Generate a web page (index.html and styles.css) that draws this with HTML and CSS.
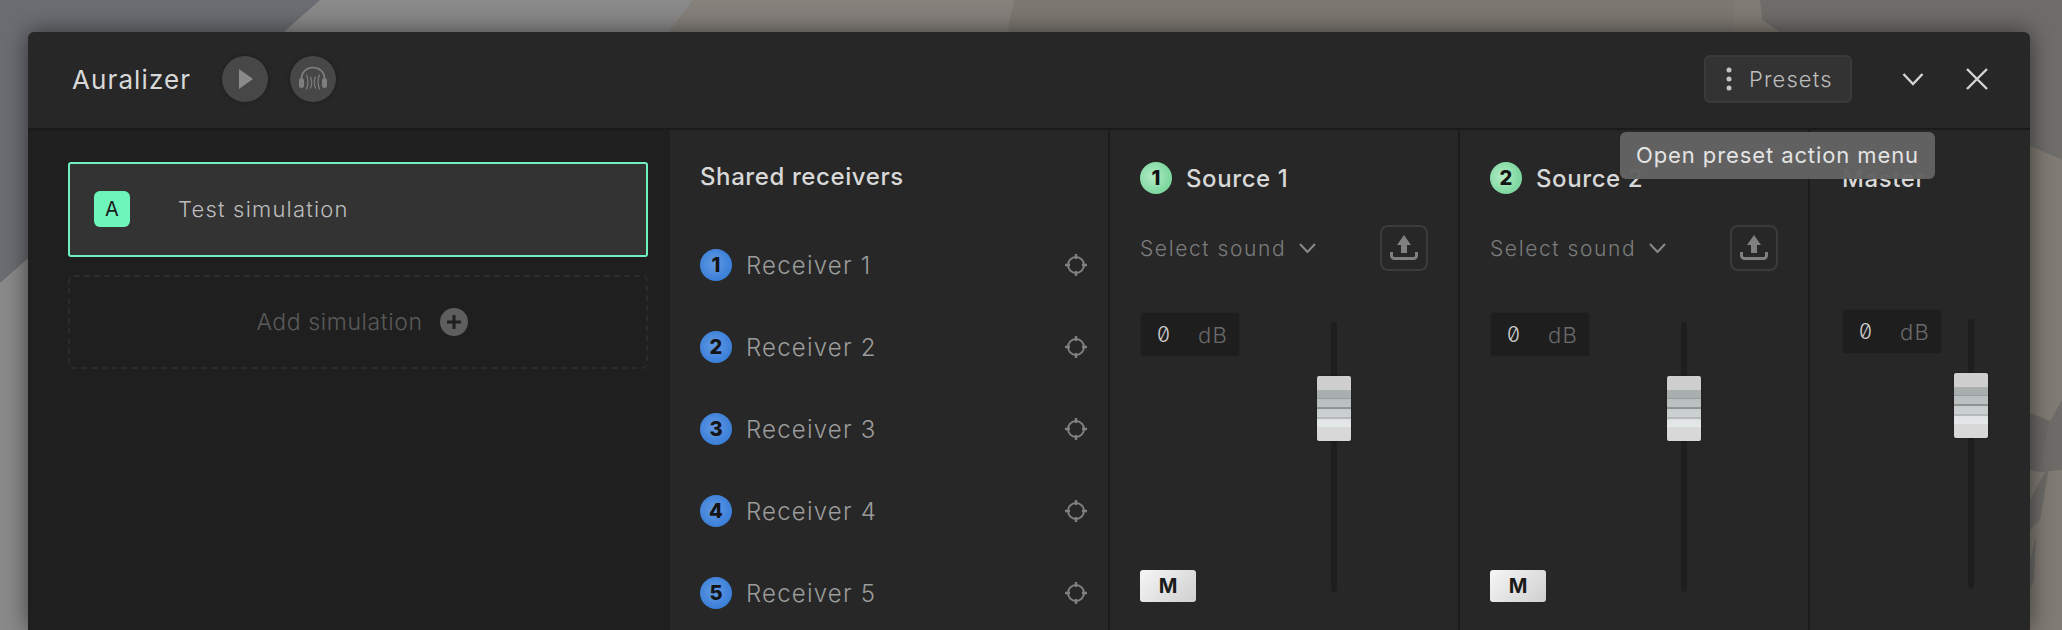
FILE: index.html
```html
<!DOCTYPE html>
<html lang="en">
<head>
  <meta charset="UTF-8">
  <meta name="viewport" content="width=device-width, initial-scale=1.0">
  <link rel="stylesheet" href="styles.css">
  <title>Auralizer</title>
</head>
<body>
  <!-- 3d model behind the window -->
  <svg class="scene" width="2062" height="630" viewBox="0 0 2062 630">
    <rect width="2062" height="630" fill="#8a8a8a"/>
    <polygon points="0,0 320,0 0,283" fill="#6b6d72"/>
    <polygon points="693,0 1014,0 1000,120 600,120" fill="#86817b"/>
    <polygon points="1014,0 1733,0 1733,120 990,120" fill="#7d7871"/>
    <polygon points="1733,0 1760,0 1762,20 1780,32 1780,120 1733,120" fill="#807b73"/>
    <polygon points="1760,0 2062,0 2062,160 2030,146 1780,120 1780,32 1762,20" fill="#6e6d6a"/>
    <polygon points="2030,146 2062,160 2062,630 2030,630" fill="#807b73"/>
    <polygon points="2030,413 2050,421 2040,472 2030,470" fill="#6a6965"/>
    <polygon points="2062,400 2050,421 2040,472 2062,470" fill="#6e6c68"/>
    <polygon points="2030,500 2050,462 2040,520 2030,530" fill="#6e6c68"/>
    <polygon points="2030,560 2036,536 2034,580 2030,590" fill="#6e6c68"/>
  </svg>

  <main class="window">
    <header class="window-header">
      <h1 class="window-title">Auralizer</h1>
      <button class="round-btn play-btn" type="button">
        <svg width="14" height="20" viewBox="0 0 14 20"><polygon points="0,0 14,10 0,20" fill="#8a8a8a"/></svg>
      </button>
      <button class="round-btn" type="button">
        <svg width="30" height="26" viewBox="0 0 30 26" fill="none" stroke="#7f7f7f" stroke-width="1.2" stroke-linecap="round">
          <path d="M3.5 13 V12 a11.5 10.5 0 0 1 23 0 V13" stroke-width="1.6"/>
          <rect x="1" y="12" width="5" height="10" rx="2.5" fill="#7f7f7f" stroke="none"/>
          <rect x="24" y="12" width="5" height="10" rx="2.5" fill="#7f7f7f" stroke="none"/>
          <path d="M8.5 9 q3 7 0 14"/>
          <path d="M12.5 11 q2.5 5.5 0 11"/>
          <path d="M17.5 11 q-2.5 5.5 0 11"/>
          <path d="M21.5 9 q-3 7 0 14"/>
        </svg>
      </button>
      <button class="presets-btn" type="button">
        <svg width="6" height="24" viewBox="0 0 6 24" fill="#c4c4c4"><circle cx="3" cy="3" r="2.5"/><circle cx="3" cy="12" r="2.5"/><circle cx="3" cy="21" r="2.5"/></svg>
        <span>Presets</span>
      </button>
      <button class="icon-btn chevron-btn" type="button">
        <svg width="22" height="14" viewBox="0 0 22 14" fill="none" stroke="#d4d4d4" stroke-width="2.4"><path d="M1.5 2 L11 12 L20.5 2"/></svg>
      </button>
      <button class="icon-btn close-btn" type="button">
        <svg width="22" height="22" viewBox="0 0 22 22" fill="none" stroke="#d4d4d4" stroke-width="2.4"><path d="M1 1 L21 21 M21 1 L1 21"/></svg>
      </button>
    </header>

    <div class="tooltip">Open preset action menu</div>

    <div class="window-body">
      <section class="sim-col">
        <div class="sim-card">
          <span class="sim-badge">A</span>
          <span class="sim-name">Test simulation</span>
        </div>
        <div class="sim-add">
          <span>Add simulation</span>
          <svg width="28" height="28" viewBox="0 0 28 28"><circle cx="14" cy="14" r="14" fill="#5e5e5e"/><path d="M7 14 H21 M14 7 V21" stroke="#1f1f1f" stroke-width="3"/></svg>
        </div>
      </section>

      <section class="receivers-col">
        <h2 class="col-title">Shared receivers</h2>
        <ul class="receiver-list">
          <li class="receiver"><span class="num-badge blue">1</span><span class="receiver-name">Receiver 1</span><svg class="crosshair"><use href="#crosshair"/></svg></li>
          <li class="receiver"><span class="num-badge blue">2</span><span class="receiver-name">Receiver 2</span><svg class="crosshair"><use href="#crosshair"/></svg></li>
          <li class="receiver"><span class="num-badge blue">3</span><span class="receiver-name">Receiver 3</span><svg class="crosshair"><use href="#crosshair"/></svg></li>
          <li class="receiver"><span class="num-badge blue">4</span><span class="receiver-name">Receiver 4</span><svg class="crosshair"><use href="#crosshair"/></svg></li>
          <li class="receiver"><span class="num-badge blue">5</span><span class="receiver-name">Receiver 5</span><svg class="crosshair"><use href="#crosshair"/></svg></li>
        </ul>
      </section>

      <section class="source-col">
        <div class="source-head"><span class="num-badge green">1</span><h2 class="col-title">Source 1</h2></div>
        <div class="sound-row">
          <span class="sound-select">Select sound
            <svg width="17" height="10" viewBox="0 0 17 10" fill="none" stroke="#8a8a8a" stroke-width="2"><path d="M1 1 L8.5 9 L16 1"/></svg>
          </span>
          <button class="upload-btn" type="button"><svg width="28" height="26"><use href="#upload"/></svg></button>
        </div>
        <div class="mixer">
          <div class="mixer-left">
            <div class="db-box"><span class="db-value">0</span><span class="db-unit">dB</span></div>
            <button class="mute-btn" type="button">M</button>
          </div>
          <div class="fader"><div class="fader-track"></div><div class="fader-thumb"></div></div>
        </div>
      </section>

      <section class="source-col">
        <div class="source-head"><span class="num-badge green">2</span><h2 class="col-title">Source 2</h2></div>
        <div class="sound-row">
          <span class="sound-select">Select sound
            <svg width="17" height="10" viewBox="0 0 17 10" fill="none" stroke="#8a8a8a" stroke-width="2"><path d="M1 1 L8.5 9 L16 1"/></svg>
          </span>
          <button class="upload-btn" type="button"><svg width="28" height="26"><use href="#upload"/></svg></button>
        </div>
        <div class="mixer">
          <div class="mixer-left">
            <div class="db-box"><span class="db-value">0</span><span class="db-unit">dB</span></div>
            <button class="mute-btn" type="button">M</button>
          </div>
          <div class="fader"><div class="fader-track"></div><div class="fader-thumb"></div></div>
        </div>
      </section>

      <section class="master-col">
        <div class="source-head"><h2 class="col-title">Master</h2></div>
        <div class="mixer master-mixer">
          <div class="db-box"><span class="db-value">0</span><span class="db-unit">dB</span></div>
          <div class="fader"><div class="fader-track"></div><div class="fader-thumb"></div></div>
        </div>
      </section>
    </div>
  </main>

  <svg class="icon-defs" width="0" height="0">
    <symbol id="crosshair" viewBox="0 0 22 22">
      <g fill="none" stroke="#808080">
        <circle cx="11" cy="11" r="8" stroke-width="2"/>
        <path d="M11 0 V5 M11 17 V22 M0 11 H5 M17 11 H22" stroke-width="2.4"/>
      </g>
    </symbol>
    <symbol id="upload" viewBox="0 0 28 26">
      <path d="M14 0 L21 10 H17 V18 H11 V10 H7 Z" fill="#808080"/>
      <path d="M1.5 17 V20.5 a3 3 0 0 0 3 3 H23.5 a3 3 0 0 0 3 -3 V17" fill="none" stroke="#808080" stroke-width="3"/>
    </symbol>
  </svg>
</body>
</html>
```

FILE: styles.css
```css
* {
  box-sizing: border-box;
}
html, body {
  height: 100%;
}
body {
  margin: 0;
  overflow: hidden;
  font-family: Inter, "Noto Sans", sans-serif;
  background-color: #8a8a8a;
}
h1, h2, ul {
  margin: 0;
  padding: 0;
}
button {
  font-family: inherit;
  padding: 0;
  border: none;
  background: none;
}
.scene {
  position: absolute;
  left: 0;
  top: 0;
}
.icon-defs {
  position: absolute;
}

.window {
  position: relative;
  display: flex;
  flex-direction: column;
  width: 2002px;
  height: 598px;
  margin: 32px 0 0 28px;
  background-color: #272727;
  border-radius: 6px 6px 0 0;
  box-shadow: 0 0 24px rgba(0, 0, 0, 0.55);
}

.window-header {
  display: flex;
  align-items: center;
  flex: 0 0 98px;
  padding: 0 42px 2px 44px;
  border-bottom: 2px solid #1a1a1a;
}
.window-title {
  width: 150px;
  font-size: 26px;
  font-weight: 400;
  letter-spacing: 1.1px;
  color: #d8d8d8;
}
.round-btn {
  display: flex;
  align-items: center;
  justify-content: center;
  width: 46px;
  height: 46px;
  margin-right: 22px;
  border-radius: 50%;
  background-color: #474747;
  box-shadow: 0 0 4px rgba(0, 0, 0, 0.3);
}
.play-btn svg {
  margin-left: 2px;
}
.presets-btn {
  display: flex;
  align-items: center;
  gap: 17px;
  width: 148px;
  height: 48px;
  margin-left: auto;
  padding-left: 20px;
  font-size: 22px;
  font-weight: 300;
  letter-spacing: 1.1px;
  color: #bdbdbd;
  background-color: #333333;
  border: 2px solid #3a3a3a;
  border-radius: 6px;
}
.icon-btn {
  display: flex;
}
.chevron-btn {
  margin-left: 50px;
}
.close-btn {
  margin-left: 42px;
}

.tooltip {
  position: absolute;
  left: 1592px;
  top: 100px;
  z-index: 2;
  padding: 0 16px;
  height: 47px;
  line-height: 47px;
  font-size: 22px;
  letter-spacing: 0.9px;
  color: #e4e4e4;
  background-color: rgba(99, 99, 99, 0.97);
  border-radius: 6px;
}

.window-body {
  display: grid;
  grid-template-columns: 642px 440px 350px 350px 220px;
  flex: 1;
  min-height: 0;
}

.sim-col {
  padding: 32px 22px 0 40px;
  background-color: #1f1f1f;
}
.sim-card {
  display: flex;
  align-items: center;
  width: 580px;
  height: 95px;
  padding: 0 0 2px 24px;
  background-color: #333333;
  border: 2px solid #6ff0bd;
  border-radius: 3px;
}
.sim-badge {
  display: flex;
  align-items: center;
  justify-content: center;
  width: 36px;
  height: 36px;
  margin-right: 48px;
  font-size: 20px;
  color: #1a1a1a;
  background-color: #6ef5bc;
  border-radius: 6px;
}
.sim-name {
  font-size: 22px;
  font-weight: 300;
  letter-spacing: 1.2px;
  color: #bdbdbd;
}
.sim-add {
  display: flex;
  align-items: center;
  justify-content: center;
  gap: 17px;
  width: 580px;
  height: 94px;
  margin-top: 18px;
  padding-left: 8px;
  font-size: 23px;
  font-weight: 300;
  letter-spacing: 0.6px;
  color: #5a5a5a;
  border: 2px dashed #2b2b2b;
  border-radius: 6px;
}

.col-title {
  font-size: 24px;
  font-weight: 500;
  letter-spacing: 0.6px;
  color: #d8d8d8;
}
.receivers-col {
  padding: 32px 0 0 30px;
  border-right: 2px solid #1c1c1c;
}
.receiver-list {
  list-style: none;
  margin-top: 33px;
}
.receiver {
  display: flex;
  align-items: center;
  height: 82px;
  padding-right: 21px;
}
.receiver-name {
  margin-left: 14px;
  font-size: 24px;
  font-weight: 300;
  letter-spacing: 1.2px;
  color: #9c9c9c;
}
.crosshair {
  width: 22px;
  height: 22px;
  margin-left: auto;
}
.num-badge {
  display: flex;
  align-items: center;
  justify-content: center;
  width: 32px;
  height: 32px;
  flex: none;
  font-size: 20px;
  font-weight: 800;
  color: #141414;
  border-radius: 50%;
}
.num-badge.blue {
  background: radial-gradient(circle at 45% 45%, #6299e4, #3a7fd8 70%);
}
.num-badge.green {
  background: radial-gradient(circle at 40% 45%, #b4ecc8, #7fd8a0 65%);
}

.source-col {
  display: flex;
  flex-direction: column;
  padding: 32px 30px 0;
  border-right: 2px solid #1c1c1c;
}
.source-head {
  display: flex;
  align-items: center;
  gap: 14px;
  height: 32px;
}
.sound-row {
  display: flex;
  align-items: center;
  justify-content: space-between;
  margin-top: 31px;
  height: 46px;
}
.sound-select {
  display: flex;
  align-items: center;
  gap: 13px;
  font-size: 21px;
  font-weight: 300;
  letter-spacing: 1.6px;
  color: #7c7c7c;
}
.upload-btn {
  display: flex;
  align-items: center;
  justify-content: center;
  width: 48px;
  height: 46px;
  background: none;
  border: 2px solid #3b3b3b;
  border-radius: 8px;
}

.mixer {
  display: flex;
  height: 290px;
  margin-top: 41px;
}
.mixer-left {
  display: flex;
  flex-direction: column;
  align-items: flex-start;
  justify-content: space-between;
  width: 177px;
}
.db-box {
  display: flex;
  align-items: center;
  justify-content: space-between;
  width: 100px;
  height: 45px;
  padding: 0 11px 0 16px;
  background-color: #1e1e1e;
  border: 1px solid #242424;
  border-radius: 4px;
}
.db-value {
  font-size: 21px;
  font-weight: 300;
  font-feature-settings: "zero";
  color: #cfcfcf;
}
.db-unit {
  font-size: 22px;
  font-weight: 300;
  letter-spacing: 1.2px;
  color: #6a6a6a;
}
.mute-btn {
  width: 56px;
  height: 32px;
  font-size: 20px;
  font-weight: 700;
  color: #1a1a1a;
  background: linear-gradient(135deg, #f6f6f6, #cfcfcf);
  border-radius: 3px;
}
.fader {
  position: relative;
  width: 34px;
  height: 290px;
}
.fader-track {
  width: 6px;
  height: 270px;
  margin: 10px auto 0;
  background-color: #1e1e1e;
  border-radius: 3px;
}
.fader-thumb {
  position: absolute;
  left: 0;
  top: 64px;
  width: 34px;
  height: 65px;
  border-radius: 2px;
  box-shadow: 0 0 2px rgba(0, 0, 0, 0.35);
  background: linear-gradient(to bottom,
    #cfcfcf 0, #cfcfcf 14px,
    #aab0af 14px, #a8aead 22px,
    #989e9d 22px, #989e9d 23px,
    #b9bfbf 23px, #bcc2c2 31px,
    #8f9392 31px, #8f9392 33px,
    #c8cdcd 33px, #cbd0d0 41px,
    #b5b9b9 41px, #b5b9b9 43px,
    #dfe3e3 43px, #e4e8e8 51px,
    #d8d8d8 51px, #d8d8d8 65px);
}

.master-col {
  display: flex;
  flex-direction: column;
  padding: 32px 0 0 32px;
}
.master-mixer {
  gap: 12px;
  margin-top: 115px;
}
```
